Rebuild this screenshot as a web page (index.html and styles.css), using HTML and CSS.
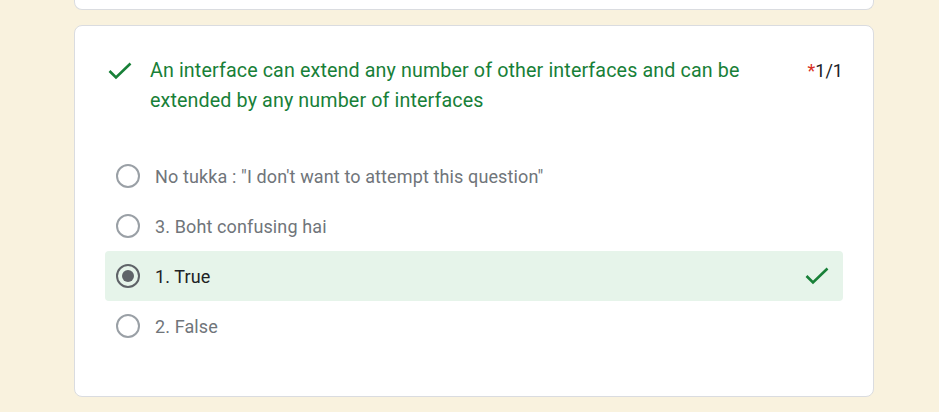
FILE: index.html
```html
<!DOCTYPE html>
<html>
<head>
<meta charset="utf-8">
<link rel="stylesheet" href="styles.css">
</head>
<body>
<div class="page">
  <div class="card card-prev"></div>
  <div class="card card-question">
    <div class="q-header">
      <div class="q-icon">
        <svg width="24" height="18" viewBox="0 0 24 18"><polyline points="1.5,9 8,15.5 22.5,1.5" fill="none" stroke="#188038" stroke-width="2.6"/></svg>
      </div>
      <div class="q-title">An interface can extend any number of other interfaces and can be extended by any number of interfaces</div>
      <div class="q-score"><span class="req">*</span>1/1</div>
    </div>
    <div class="options">
      <div class="option">
        <span class="radio"></span>
        <span class="opt-label">No tukka : "I don't want to attempt this question"</span>
      </div>
      <div class="option">
        <span class="radio"></span>
        <span class="opt-label">3. Boht confusing hai</span>
      </div>
      <div class="option option-correct">
        <span class="radio radio-checked"></span>
        <span class="opt-label">1. True</span>
        <svg class="opt-check" width="24" height="18" viewBox="0 0 24 18"><polyline points="1.5,9 8,15.5 22.5,1.5" fill="none" stroke="#188038" stroke-width="2.6"/></svg>
      </div>
      <div class="option">
        <span class="radio"></span>
        <span class="opt-label">2. False</span>
      </div>
    </div>
  </div>
</div>
</body>
</html>
```
FILE: styles.css
```css
html, body {
  margin: 0;
  padding: 0;
}
body {
  background: #f9f2de;
  font-family: Roboto, "Liberation Sans", Arial, sans-serif;
  width: 939px;
  height: 412px;
  overflow: hidden;
}
.page {
  width: 800px;
  margin-left: 74px;
  display: flex;
  flex-direction: column;
  gap: 15px;
}
.card {
  background: #fff;
  border: 1px solid #dadce0;
  border-radius: 8px;
}
.card-prev {
  height: 9px;
  border-top: none;
  border-radius: 0 0 8px 8px;
}
.card-question {
  padding: 30px 30px 0 30px;
  box-sizing: border-box;
  height: 372px;
}
.q-header {
  display: flex;
  align-items: flex-start;
}
.q-icon {
  width: 45px;
  flex: none;
  padding-top: 6px;
  padding-left: 3px;
  box-sizing: border-box;
}
.q-icon svg {
  display: block;
}
.q-title {
  flex: 1;
  font-size: 19.7px;
  letter-spacing: 0.12px;
  line-height: 30px;
  color: #188038;
  padding-right: 40px;
}
.q-score {
  flex: none;
  font-size: 18px;
  line-height: 30px;
  color: #202124;
}
.req {
  color: #d93025;
}
.options {
  margin-top: 35px;
  display: flex;
  flex-direction: column;
}
.option {
  height: 50px;
  display: flex;
  align-items: center;
  padding: 0 14px 0 11px;
  gap: 15px;
  border-radius: 4px;
}
.option-correct {
  background: #e6f4ea;
}
.radio {
  width: 24px;
  height: 24px;
  box-sizing: border-box;
  border: 2px solid #9aa0a6;
  border-radius: 50%;
  flex: none;
  display: flex;
  align-items: center;
  justify-content: center;
}
.radio-checked {
  border-color: #5f6368;
}
.radio-checked::after {
  content: "";
  width: 12px;
  height: 12px;
  border-radius: 50%;
  background: #5f6368;
}
.opt-label {
  flex: 1;
  font-size: 18px;
  letter-spacing: 0.12px;
  color: #70757a;
}
.option-correct .opt-label {
  color: #202124;
}
.opt-check {
  flex: none;
}
```
